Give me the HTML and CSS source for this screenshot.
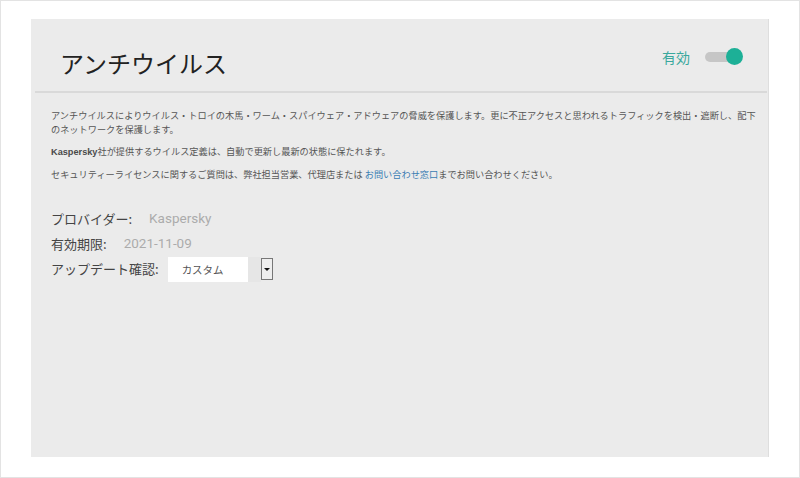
FILE: index.html
```html
<!DOCTYPE html>
<html>
<head>
  <meta charset="utf-8">
  <title>アンチウイルス</title>
  <link rel="stylesheet" href="styles.css">
</head>
<body>
  <div class="frame">
    <div class="panel">
      <div class="header">
        <h1 class="title">アンチウイルス</h1>
        <div class="status">
          <span class="status-label">有効</span>
          <span class="switch"><span class="knob"></span></span>
        </div>
      </div>
      <div class="content">
        <p class="note">アンチウイルスによりウイルス・トロイの木馬・ワーム・スパイウェア・アドウェアの脅威を保護します。更に不正アクセスと思われるトラフィックを検出・遮断し、配下のネットワークを保護します。</p>
        <p class="note"><span class="brand">Kaspersky</span>社が提供するウイルス定義は、自動で更新し最新の状態に保たれます。</p>
        <p class="note">セキュリティーライセンスに関するご質問は、弊社担当営業、代理店または <a href="#">お問い合わせ窓口</a>までお問い合わせください。</p>

        <div class="info">
          <div class="row">
            <span class="label">プロバイダー:</span>
            <span class="value">Kaspersky</span>
          </div>
          <div class="row">
            <span class="label">有効期限:</span>
            <span class="value">2021-11-09</span>
          </div>
          <div class="row">
            <span class="label">アップデート確認:</span>
            <div class="select">
              <span class="select-text">カスタム</span>
              <span class="select-arrow"></span>
              <span class="select-btn"></span>
            </div>
          </div>
        </div>
      </div>
    </div>
  </div>
</body>
</html>
```

FILE: styles.css
```css
body {
  margin: 0;
  padding: 0;
  background: #ffffff;
  font-family: "Noto Sans CJK JP", "Noto Sans", sans-serif;
}

.frame {
  width: 800px;
  height: 478px;
  box-sizing: border-box;
  border: 1px solid #e3e3e3;
  padding: 18px 30px 20px 30px;
}

.panel {
  height: 100%;
  background-color: #ebebeb;
  border-right: 1px solid #dedede;
  box-sizing: border-box;
}

.header {
  display: flex;
  justify-content: space-between;
  align-items: center;
  height: 72px;
  padding: 0 24px 0 25px;
  border-bottom: 2px solid #d9d9d9;
  margin: 0 1px 0 4px;
}

.title {
  margin: 0;
  font-size: 24px;
  font-weight: 400;
  color: #222222;
  padding-top: 14px;
}

.status {
  display: flex;
  align-items: center;
  margin-top: 3px;
}

.status-label {
  font-size: 14px;
  color: #3aa89d;
  margin-right: 15px;
}

.switch {
  position: relative;
  display: inline-block;
  width: 30px;
  height: 10px;
  border-radius: 5px;
  background-color: #c6c6c6;
  margin-right: 8px;
}

.knob {
  position: absolute;
  right: -8px;
  top: -4px;
  width: 17px;
  height: 17px;
  border-radius: 50%;
  background-color: #1db097;
}

.content {
  padding: 15px 6px 0 20px;
}

.note {
  margin: 0 0 8px 0;
  font-size: 9.2px;
  line-height: 14px;
  color: #555555;
}

.brand {
  font-family: "Liberation Sans", Arial, sans-serif;
  font-weight: bold;
  color: #4a4a4a;
}

.note a {
  color: #3a7db3;
  text-decoration: none;
}

.info {
  margin-top: 25px;
}

.row {
  display: flex;
  align-items: center;
  height: 24px;
  margin-bottom: 1px;
}

.label {
  font-size: 13px;
  color: #444444;
  margin-right: 17px;
}

.value {
  font-family: Roboto, "Liberation Sans", sans-serif;
  font-size: 13.5px;
  color: #ababab;
}

.select {
  display: flex;
  align-items: stretch;
  height: 25px;
  margin-top: 3px;
  margin-left: -8px;
}

.select-text {
  width: 66px;
  background-color: #ffffff;
  font-size: 10.5px;
  color: #555555;
  line-height: 25px;
  padding-left: 14px;
}

.select-arrow {
  width: 13px;
  background-color: #e6e6e6;
}

.select-btn {
  position: relative;
  width: 10px;
  margin: 1px 0 2px 0;
  border: 1px solid #777777;
  background-color: #eeeeee;
}

.select-btn::after {
  content: "";
  position: absolute;
  left: 2px;
  top: 9px;
  border-left: 3px solid transparent;
  border-right: 3px solid transparent;
  border-top: 3px solid #111111;
}
```
